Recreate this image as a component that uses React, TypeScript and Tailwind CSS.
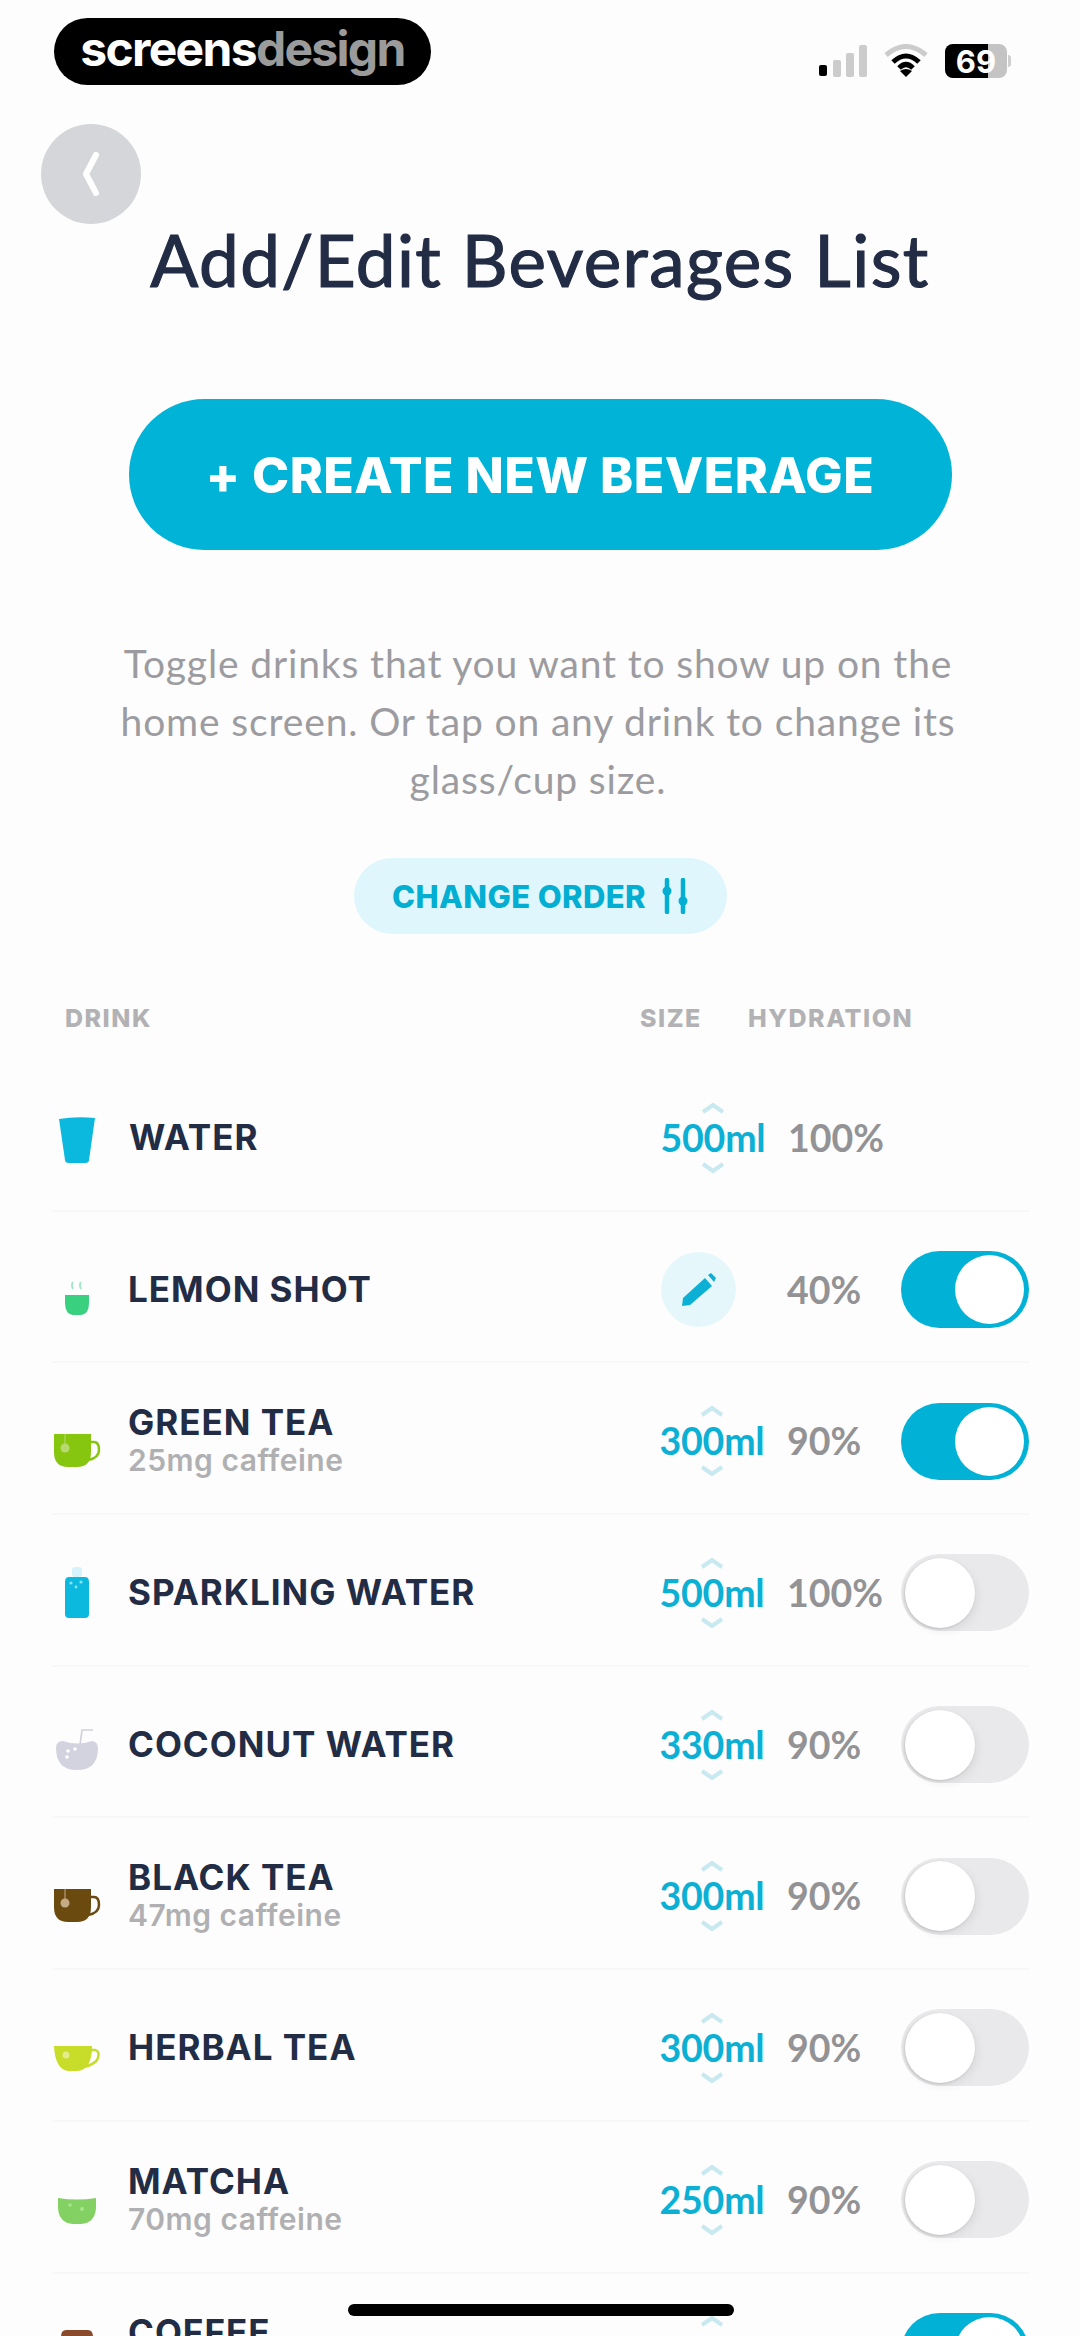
import React from "react";

const inter = "font-['Inter','Liberation_Sans',sans-serif]";
const nun = "font-['Lato','Open_Sans',sans-serif]";

function Glass() {
  return (
    <svg width="38" height="48" viewBox="0 0 38 48">
      <path d="M1 3 Q18 0 37 2 L31 44 Q31 47 27 47 L11 47 Q7 47 7 44 Z" fill="#0bb9de" />
    </svg>
  );
}
function SmallCup() {
  return (
    <svg width="26" height="36" viewBox="0 0 26 36">
      <path d="M9 1 Q7 4 9 8 M17 1 Q15 4 17 8" stroke="#a5e6c8" strokeWidth="2" fill="none" />
      <path d="M1 14 L25 14 L25 22 Q25 33 17 34 L9 34 Q1 33 1 22 Z" fill="#39d07f" />
    </svg>
  );
}
function Mug({ fill, dot }: { fill: string; dot: string }) {
  return (
    <svg width="48" height="36" viewBox="0 0 48 36">
      <path d="M35 10 H41 Q46 10 46 18 Q46 26 35 28" stroke={fill} strokeWidth="2.5" fill="none" />
      <path d="M1 2 H38 V20 Q38 35 24 35 H15 Q1 35 1 20 Z" fill={fill} />
      <path d="M12 2 V12" stroke={dot} strokeWidth="1" />
      <circle cx="12" cy="16" r="4.5" fill={dot} />
    </svg>
  );
}
function Bottle() {
  return (
    <svg width="26" height="52" viewBox="0 0 26 52">
      <rect x="8" y="0" width="10" height="10" rx="3" fill="#d5f3fa" />
      <path d="M5 10 H21 Q25 10 25 15 V47 Q25 51 21 51 H5 Q1 51 1 47 V15 Q1 10 5 10 Z" fill="#0bb9de" />
      <circle cx="7" cy="16" r="1.6" fill="#8fe2f3" />
      <circle cx="17" cy="15" r="1.6" fill="#8fe2f3" />
      <circle cx="12" cy="20" r="1.4" fill="#8fe2f3" />
    </svg>
  );
}
function Coconut() {
  return (
    <svg width="44" height="44" viewBox="0 0 44 44">
      <path d="M25 18 L27 3 H38" stroke="#cfcfd9" strokeWidth="1.6" fill="none" />
      <path d="M1 21 Q1 14 8 14 Q22 19 37 14 Q43 15 43 21 Q43 43 22 43 Q1 43 1 21 Z" fill="#d3d2df" />
      <circle cx="13" cy="24" r="1.8" fill="#fff" />
      <circle cx="20" cy="22" r="1.8" fill="#fff" />
      <circle cx="12" cy="30" r="1.8" fill="#fff" />
    </svg>
  );
}
function HerbalCup() {
  return (
    <svg width="48" height="30" viewBox="0 0 48 30">
      <path d="M36 7 H42 Q47 8 45 15 Q43 21 31 24" stroke="#c8dc2a" strokeWidth="2.5" fill="none" />
      <path d="M1 3 H39 Q39 27 24 28 H15 Q2 26 1 3 Z" fill="#c8dc2a" />
      <circle cx="13" cy="12" r="3.5" fill="#e3ec8a" />
    </svg>
  );
}
function Bowl() {
  return (
    <svg width="40" height="30" viewBox="0 0 40 30">
      <path d="M1 2 Q20 5 39 2 V12 Q38 27 24 28 H16 Q2 27 1 12 Z" fill="#84d163" />
      <circle cx="13" cy="9" r="1.8" fill="#a8e390" />
      <circle cx="25" cy="13" r="2" fill="#a8e390" />
    </svg>
  );
}
function Cof() {
  return (
    <svg width="38" height="44" viewBox="0 0 38 44">
      <path d="M8 1 H30 Q35 1 35 8 L37 44 H1 L3 8 Q3 1 8 1 Z" fill="#8a4b2c" />
    </svg>
  );
}

function Toggle({ on }: { on: boolean }) {
  return on ? (
    <div className="flex h-[77px] w-[128px] shrink-0 items-center justify-end rounded-full bg-[#02b2d6] pr-[5px]">
      <div className="h-[69px] w-[69px] rounded-full bg-white" />
    </div>
  ) : (
    <div className="flex h-[77px] w-[128px] shrink-0 items-center rounded-full bg-[#e9e8ea] pl-[4px]">
      <div className="h-[70px] w-[70px] rounded-full bg-white shadow-[-1px_1px_3px_rgba(0,0,0,0.16),4px_4px_8px_rgba(0,0,0,0.05)]" />
    </div>
  );
}

function Size({ v }: { v: string }) {
  return (
    <div className="relative flex w-[104px] items-center justify-center">
      <svg className="absolute top-[-17px] left-[40px]" width="24" height="14" viewBox="0 0 24 14">
        <path d="M2 11 L12 4 L22 11" stroke="#c9e9f0" strokeWidth="4" fill="none" />
      </svg>
      <span className={`${nun} text-[37.5px] leading-[40px] font-bold tracking-[-0.2px] text-[#0bb0d4]`}>{v}</span>
      <svg className="absolute bottom-[-17px] left-[40px]" width="24" height="14" viewBox="0 0 24 14">
        <path d="M2 3 L12 10 L22 3" stroke="#c9e9f0" strokeWidth="4" fill="none" />
      </svg>
    </div>
  );
}

type Row = { name: string; sub?: string; icon: React.ReactNode; ic: string; size?: string; hyd: string; tog?: boolean };
const rows: Row[] = [
  { name: "WATER", icon: <Glass />, ic: "translate-y-[2px]", size: "500ml", hyd: "100%" },
  { name: "LEMON SHOT", icon: <SmallCup />, ic: "translate-y-[9px]", hyd: "40%", tog: true },
  { name: "GREEN TEA", sub: "25mg caffeine", icon: <Mug fill="#86c60f" dot="#b7d96f" />, ic: "translate-y-[9px]", size: "300ml", hyd: "90%", tog: true },
  { name: "SPARKLING WATER", icon: <Bottle />, ic: "translate-y-0", size: "500ml", hyd: "100%", tog: false },
  { name: "COCONUT WATER", icon: <Coconut />, ic: "translate-y-[4px]", size: "330ml", hyd: "90%", tog: false },
  { name: "BLACK TEA", sub: "47mg caffeine", icon: <Mug fill="#6b4a10" dot="#c4ab86" />, ic: "translate-y-[9px]", size: "300ml", hyd: "90%", tog: false },
  { name: "HERBAL TEA", icon: <HerbalCup />, ic: "translate-y-[10px]", size: "300ml", hyd: "90%", tog: false },
  { name: "MATCHA", sub: "70mg caffeine", icon: <Bowl />, ic: "translate-y-[11px]", size: "250ml", hyd: "90%", tog: false },
  { name: "COFFEE", sub: "95mg caffeine", icon: <Cof />, ic: "translate-y-0", size: "250ml", hyd: "90%", tog: true },
];

export default function App() {
  return (
    <div className="relative h-[2336px] w-[1080px] overflow-hidden bg-[#fdfdfd]">
      {/* recording badge and status bar */}
      <div className="absolute top-[18px] left-[54px] flex h-[67px] w-[377px] items-center justify-center rounded-[34px] bg-black pb-[6px]">
        <span className={`${inter} text-[48px] leading-none font-bold tracking-[-1.7px] text-white`}>
          screens<span className="text-[#9b9b9b]">design</span>
        </span>
      </div>
      <div className="absolute top-[44px] left-[818px] flex items-center">
        <svg width="50" height="34" viewBox="0 0 50 34">
          <rect x="1" y="21" width="8" height="11" rx="2" fill="#000" />
          <rect x="15" y="16" width="8" height="17" rx="2" fill="#ccc" />
          <rect x="28" y="9" width="8" height="24" rx="2" fill="#ccc" />
          <rect x="41" y="1" width="8" height="32" rx="2" fill="#ccc" />
        </svg>
        <svg className="ml-[16px]" width="44" height="34" viewBox="0 0 44 34">
          <path d="M2 11 Q22 -6 42 11" stroke="#ccc" strokeWidth="5" fill="none" />
          <path d="M9 18 Q22 6 35 18" stroke="#000" strokeWidth="5" fill="none" />
          <path d="M15 24 Q22 17 29 24" stroke="#000" strokeWidth="5" fill="none" />
          <path d="M22 33 L16 27 Q22 23 28 27 Z" fill="#000" />
        </svg>
        <div className="relative ml-[17px] flex h-[34px] w-[62px] items-center justify-center overflow-hidden rounded-[8px] bg-[#c4c4c4]">
          <div className="absolute top-0 bottom-0 left-0 w-[43px] bg-black" />
          <span className={`${inter} relative text-[31px] leading-none font-bold text-white`}>69</span>
        </div>
        <div className="ml-[1px] h-[12px] w-[3px] rounded-r-full bg-[#cfcfcf]" />
      </div>

      {/* back button */}
      <div className="absolute top-[124px] left-[41px] flex h-[100px] w-[100px] items-center justify-center rounded-full bg-[#d5d6d9]">
        <svg width="20" height="44" viewBox="0 0 20 44">
          <path d="M15 3 L5 22 L15 41" stroke="#fff" strokeWidth="6" strokeLinecap="round" strokeLinejoin="round" fill="none" />
        </svg>
      </div>

      {/* page flow */}
      <div className="flex flex-col items-center pt-[217px]">
        <h1 className={`${nun} text-center text-[71px] leading-[86px] font-normal tracking-[1.4px] text-[#222c45] [-webkit-text-stroke:1.2px_#222c45]`}>Add/Edit Beverages List</h1>

        <div className="mt-[96px] flex h-[151px] w-[823px] items-center justify-center rounded-[76px] bg-[#00b3d7]">
          <span className={`${inter} text-[50px] leading-none font-extrabold tracking-[0.5px] text-white`}>+ CREATE NEW BEVERAGE</span>
        </div>

        <p className={`${nun} mt-[84px] w-[900px] pr-[4px] text-center text-[39px] leading-[58px] tracking-[0.85px] text-[#9c9ca0]`}>
          Toggle drinks that you want to show up on the
          <br />
          home screen. Or tap on any drink to change its
          <br />
          glass/cup size.
        </p>

        <div className="mt-[50px] flex h-[76px] w-[373px] items-center justify-center gap-[16px] rounded-full bg-[#dff7fc]">
          <span className={`${inter} text-[31px] leading-none font-extrabold tracking-[0.4px] text-[#03aed3]`}>CHANGE ORDER</span>
          <svg width="26" height="36" viewBox="0 0 26 36">
            <path d="M5 2 V34 M21 2 V34" stroke="#03aed3" strokeWidth="4.5" strokeLinecap="round" />
            <circle cx="5" cy="13" r="4.5" fill="#03aed3" />
            <circle cx="21" cy="23" r="4.5" fill="#03aed3" />
          </svg>
        </div>

        <div className={`${inter} mt-[70px] flex h-[28px] w-full items-center text-[25px] leading-none font-extrabold tracking-[1.5px] text-[#b2b2b4]`}>
          <span className="ml-[65px] w-[575px]">DRINK</span>
          <span className="w-[108px]">SIZE</span>
          <span>HYDRATION</span>
        </div>

        <div className="mt-[28px] ml-[52px] flex w-[977px] flex-col self-start">
          {rows.map((r) => (
            <div key={r.name} className="flex h-[151.7px] shrink-0 items-center border-b-2 border-[#f8f8f8] pt-[6px]">
              <div className={`flex w-[50px] justify-center ${r.ic}`}>{r.icon}</div>
              <div className="ml-[27px] flex w-[532px] shrink-0 flex-col">
                <span className={`${inter} text-[35px] leading-[39px] font-bold tracking-[1px] text-[#222c45]`}>{r.name}</span>
                {r.sub && (
                  <span className={`${inter} text-[30px] leading-[37px] font-semibold tracking-[0.5px] text-[#b0b0b2]`}>{r.sub}</span>
                )}
              </div>
              <div className="flex w-[104px] shrink-0 justify-start">
                {r.size ? (
                  <Size v={r.size} />
                ) : (
                  <div className="ml-[1px] flex h-[75px] w-[75px] items-center justify-center rounded-full bg-[#e6f7fb]">
                    <svg width="38" height="38" viewBox="0 0 38 38">
                      <path d="M2 35 L3 27 L25 7 L32 15 L10 34 Z" fill="#0bb0d4" />
                      <path d="M28 4 L31 2 L36 7 L34 11 Z" fill="#0bb0d4" />
                    </svg>
                  </div>
                )}
              </div>
              <span className={`${nun} ml-[23px] w-[114px] shrink-0 text-[37.5px] leading-[40px] font-bold text-[#939395]`}>{r.hyd}</span>
              {r.tog !== undefined && <Toggle on={r.tog} />}
            </div>
          ))}
        </div>
      </div>

      {/* home indicator */}
      <div className="absolute top-[2304px] left-[348px] h-[12px] w-[386px] rounded-full bg-black" />
    </div>
  );
}
